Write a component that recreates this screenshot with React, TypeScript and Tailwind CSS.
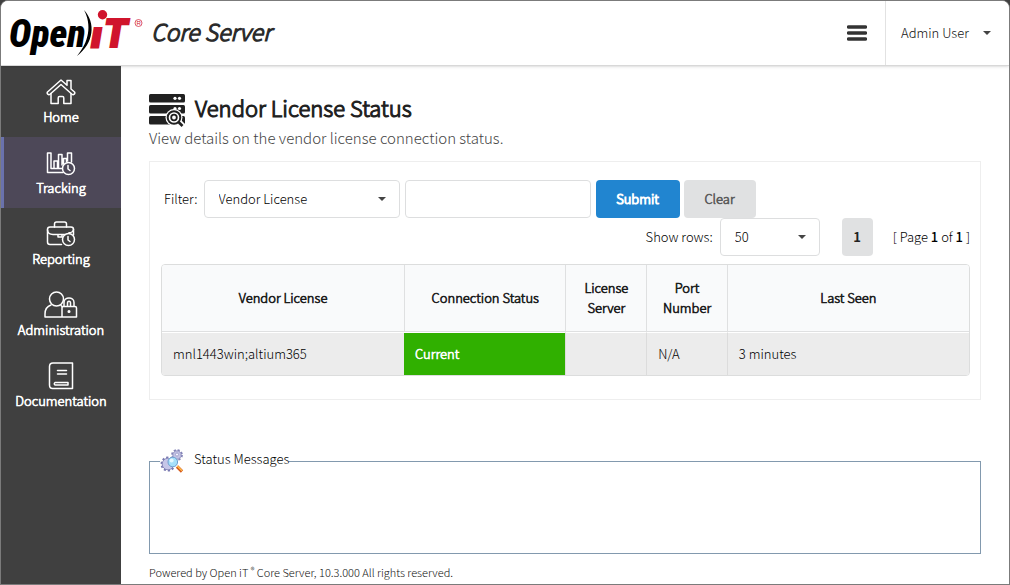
import type { ReactNode } from 'react';

const iconProps = {
  fill: 'none',
  stroke: 'currentColor',
  strokeLinecap: 'round' as const,
  strokeLinejoin: 'round' as const,
  'aria-hidden': true,
};

const strong = 'font-light [-webkit-text-stroke:0.05em_currentColor]';

function Logo() {
  return (
    <svg viewBox="0 0 142 60" className="h-[60px] w-[142px] shrink-0" role="img" aria-label="Open iT">
      <g
        fontFamily='"Roboto Condensed", "Liberation Sans Narrow", sans-serif'
        fontWeight="900"
        fontStyle="italic"
      >
        <text x="8" y="46" fontSize="38" fill="#000">Open</text>
        <g fill="#d0142c">
          <text x="91" y="46" fontSize="37" stroke="#d0142c" strokeWidth="3">i</text>
          <rect x="90" y="12" width="17" height="14" fill="#fff" />
          <text x="103" y="46" fontSize="38" fontFamily='"Roboto", sans-serif' stroke="#d0142c" strokeWidth="2">T</text>
        </g>
      </g>
      <path d="M83 9 C95 22 93 42 76 55 C88 41 91 24 83 9 Z" fill="#000" />
      <circle cx="101.500" cy="13.700" r="4.700" fill="#d0142c" />
      <circle cx="137.500" cy="22" r="3.500" fill="none" stroke="#d0142c" strokeWidth="0.700" />
      <text x="135.500" y="24" fontSize="6" fill="#d0142c" fontFamily="Liberation Sans, sans-serif">R</text>
    </svg>
  );
}

function HomeIcon() {
  return (
    <svg viewBox="0 0 30 26" className="h-[26px] w-[30px]" strokeWidth="1.500" {...iconProps}>
      <path d="M15 1 L21 6.300 V1.500 H25 V10 L28.500 13 C29.500 14.500 27.500 16.500 26 15.200 L15 5.500 L4 15.200 C2.500 16.500 .5 14.500 1.500 13 Z" />
      <path d="M5 14.500 V24.500 H12.200 V19 Q12.200 17.500 13.500 17.500 H16.500 Q17.800 17.500 17.800 19 V24.500 H25 V14.500" />
    </svg>
  );
}

function TrackingIcon() {
  return (
    <svg viewBox="0 0 30 26" className="h-[26px] w-[30px]" strokeWidth="1.500" {...iconProps}>
      <path d="M1.500 3 H5 V18.500 H16 M1.500 3 V22.500 H17" />
      <path d="M8 18 V11 H11.500 V18 M12.500 18 V4.500 H16 V15 M17.500 14 V8.500 H20.500 V11.500 M21.500 11 V3 H25.500 V12" />
      <circle cx="22.500" cy="18.500" r="6" />
      <path d="M22 15.500 V19 L24 20.500" />
    </svg>
  );
}

function ReportingIcon() {
  return (
    <svg viewBox="0 0 30 26" className="h-[26px] w-[30px]" strokeWidth="1.500" {...iconProps}>
      <path d="M8.500 6 V3 Q8.500 1 10.500 1 H18.500 Q20.500 1 20.500 3 V6" />
      <path d="M15.500 23.500 H4 Q1.500 23.500 1.500 21 V8.500 Q1.500 6 4 6 H25 Q27.500 6 27.500 8.500 V14" />
      <path d="M1.500 9 Q2 13.500 7 13.500 H19 M12 13.500 V16 H16 V13.500 M23 11.800 Q27 11.500 27.500 8.500" />
      <circle cx="22.500" cy="18.500" r="6" />
      <path d="M22 15.500 V19 L24 20.500" />
    </svg>
  );
}

function AdminIcon() {
  return (
    <svg viewBox="0 0 34 28" className="h-[28px] w-[34px]" strokeWidth="1.500" {...iconProps}>
      <circle cx="12.500" cy="8" r="7" />
      <path d="M7 14 Q1 16 1 23 V26 H32.500 V17 Q32.500 15.500 31 15.500 H18 V26 M17 14.500 L18.500 16" />
      <path d="M20 15 V11.500 C20 5.500 30 5.500 30 11.500 V15 M23.500 15 V12 C23.500 9.500 26.500 9.500 26.500 12 V15" />
      <circle cx="25" cy="20.500" r="0.800" fill="currentColor" />
    </svg>
  );
}

function DocsIcon() {
  return (
    <svg viewBox="0 0 26 28" className="h-[28px] w-[26px]" strokeWidth="1.500" {...iconProps}>
      <path d="M24.500 26.500 H4.500 Q1.500 26.500 1.500 23 V4.500 Q1.500 1 5 1 H24.500 Z" />
      <path d="M9.500 8.500 H18.500 M9.500 12 H18.500 M7 20.500 H20 V23 H7 Q5.500 21.800 7 20.500 Z" />
    </svg>
  );
}

function ServerSearchIcon() {
  return (
    <svg viewBox="0 0 36 34" className="h-[34px] w-[36px] shrink-0" aria-hidden="true">
      <g fill="#212121">
        <rect y="1" width="36" height="8.500" rx="1.500" />
        <rect y="12" width="36" height="8.500" rx="1.500" />
        <rect y="23" width="36" height="8.500" rx="1.500" />
      </g>
      <g fill="#fff">
        <circle cx="26" cy="5.300" r="1.600" />
        <circle cx="30.500" cy="5.300" r="1.600" />
        <circle cx="26" cy="15.500" r="1.600" />
        <circle cx="30.500" cy="15.500" r="1.600" />
        <circle cx="25" cy="24.500" r="8.500" />
        <path d="M28 30 L31 26 L36 31 V34 H31 Z" />
      </g>
      <circle cx="25" cy="24.500" r="6.300" fill="none" stroke="#212121" strokeWidth="2" />
      <circle cx="25" cy="24.500" r="2.800" fill="none" stroke="#212121" strokeWidth="1.800" />
      <path d="M29.500 29 L33.500 33" stroke="#212121" strokeWidth="2.600" />
    </svg>
  );
}

function GearSearchIcon() {
  return (
    <svg viewBox="0 0 24 24" className="h-6 w-6 shrink-0" aria-hidden="true">
      <circle cx="17" cy="6" r="5" fill="none" stroke="#8585b8" strokeWidth="1.800" strokeDasharray="2.200 1.727" />
      <circle cx="17" cy="6" r="4.200" fill="#c2c2e4" stroke="#8585b8" strokeWidth="0.800" />
      <circle cx="17" cy="5.500" r="1.500" fill="#f4f4ff" stroke="#8585b8" strokeWidth="0.600" />
      <circle cx="8" cy="15" r="6.600" fill="none" stroke="#7878b0" strokeWidth="1.800" strokeDasharray="2.200 1.948" />
      <circle cx="8" cy="15" r="5.800" fill="#c6c6e8" stroke="#7878b0" strokeWidth="0.800" />
      <path d="M17 17.500 L22 22.500" stroke="#d4581c" strokeWidth="3.200" />
      <path d="M17.200 17 L22 21.800" stroke="#ffc04d" strokeWidth="1.300" />
      <circle cx="12.800" cy="13" r="4.800" fill="#a5e0fb" stroke="#6d9fd0" strokeWidth="1" />
      <circle cx="11.600" cy="11.600" r="2" fill="#e4f8ff" />
    </svg>
  );
}

function Caret({ className = '' }: { className?: string }) {
  return (
    <svg viewBox="0 0 8 4" className={`h-1 w-2 ${className}`} aria-hidden="true">
      <path d="M0 0 H8 L4 4 Z" fill="#444" />
    </svg>
  );
}

function Select({ id, options, className }: { id: string; options: string[]; className: string }) {
  return (
    <div className={`relative ${className}`}>
      <select
        id={id}
        className="h-[38px] w-full appearance-none rounded border border-[#dddedf] bg-white pl-[14px] text-[13px] text-black"
      >
        {options.map((o) => (
          <option key={o}>{o}</option>
        ))}
      </select>
      <Caret className="pointer-events-none absolute top-[17px] right-[14px]" />
    </div>
  );
}

const nav: { label: string; icon: ReactNode; active?: boolean }[] = [
  { label: 'Home', icon: <HomeIcon /> },
  { label: 'Tracking', icon: <TrackingIcon />, active: true },
  { label: 'Reporting', icon: <ReportingIcon /> },
  { label: 'Administration', icon: <AdminIcon /> },
  { label: 'Documentation', icon: <DocsIcon /> },
];

const columns = [
  { label: 'Vendor License', width: 'w-[30%]' },
  { label: 'Connection Status', width: 'w-[20%]' },
  { label: 'License Server', width: 'w-[10%]' },
  { label: 'Port Number', width: 'w-[10%]' },
  { label: 'Last Seen', width: 'w-[30%]' },
];

export default function App() {
  return (
    <div className="flex min-h-screen bg-[#404040] font-['Noto_Sans_CJK_SC','Noto_Sans',sans-serif] text-[13px] leading-5 font-light text-black">
      <div className="flex flex-1 flex-col overflow-hidden rounded-t-lg border border-[#7b7b7b] bg-white">
        <header className="z-10 flex h-[65px] items-stretch border-b border-[#d8d8d8] bg-white shadow-sm">
          <a href="#home" className="flex items-start">
            <Logo />
            <span className={`pt-[14px] pl-2 text-[23px] leading-8 text-[#2b2b2b] italic ${strong}`}>Core Server</span>
          </a>
          <button type="button" aria-label="Menu" className="ml-auto flex w-14 items-center justify-center">
            <svg viewBox="0 0 20 16" className="h-4 w-5" aria-hidden="true">
              <path d="M1.500 2 H18.500 M1.500 8 H18.500 M1.500 14 H18.500" stroke="#333" strokeWidth="3.400" strokeLinecap="round" />
            </svg>
          </button>
          <button type="button" className="flex w-[124px] items-center justify-between border-l border-[#e2e2e2] pr-[18px] pl-[15px] text-[#111]">
            Admin User
            <Caret />
          </button>
        </header>

        <div className="flex flex-1">
          <nav className="w-[120px] shrink-0 bg-[#404040] text-white">
            {nav.map((n) => (
              <a
                key={n.label}
                href={`#${n.label.toLowerCase()}`}
                className={`flex h-[71px] flex-col items-center border-l-3 pt-[11px] pr-[3px] ${strong} ${
                  n.active ? 'border-[#6a72ad] bg-[#4d4858]' : 'border-transparent'
                }`}
              >
                <span className="flex h-[30px] items-center">{n.icon}</span>
                <span className="whitespace-nowrap">{n.label}</span>
              </a>
            ))}
          </nav>

          <main className="min-w-0 flex-1 px-7 pt-[27px]">
            <div className="flex items-start gap-[10px]">
              <ServerSearchIcon />
              <h1 className={`text-[22px] leading-7 text-[#212121] ${strong}`}>Vendor License Status</h1>
            </div>
            <p className="text-[15px] leading-[22px] text-[#444]">View details on the vendor license connection status.</p>

            <section className="mt-3 border border-[#eee] pt-[18px] pr-[10px] pb-[23px] pl-[11px]">
              <form className="flex items-center" onSubmit={(e) => e.preventDefault()}>
                <label htmlFor="filter" className="mr-[6px] ml-[3px]">Filter:</label>
                <Select id="filter" options={['Vendor License']} className="w-[196px]" />
                <input
                  type="text"
                  aria-label="Filter value"
                  className="mr-[5px] ml-[5px] h-[38px] w-[186px] rounded border border-[#dddedf] px-3"
                />
                <button type="submit" className="h-[38px] w-[84px] rounded bg-[#2185d0] font-light text-white [-webkit-text-stroke:0.08em_currentColor]">Submit</button>
                <button type="reset" className={`ml-1 h-[38px] w-[72px] rounded bg-[#e0e1e2] text-[#5a5a5a] ${strong}`}>Clear</button>
              </form>

              <div className="flex items-center justify-end">
                <label htmlFor="rows" className="mr-[7px]">Show rows:</label>
                <Select id="rows" options={['50']} className="w-[100px]" />
                <button type="button" className="ml-[22px] h-[38px] w-[31px] rounded bg-[#e0e1e2] font-bold text-[#222]">1</button>
                <span className="ml-5">
                  [ Page <b className="font-medium">1</b> of <b className="font-medium">1</b> ]
                </span>
              </div>

              <div className="mt-2 overflow-hidden rounded border border-[#dcdddd]">
                <table className="w-full table-fixed border-separate border-spacing-0">
                  <thead>
                    <tr className="bg-[#f9fafb]">
                      {columns.map((c) => (
                        <th
                          key={c.label}
                          className={`h-[67px] border-b border-l border-[#dfe0e1] px-3 text-[#1c1c1c] first:border-l-0 ${strong} ${c.width}`}
                        >
                          {c.label}
                        </th>
                      ))}
                    </tr>
                  </thead>
                  <tbody>
                    <tr className="bg-[#ececec]">
                      <td className="h-[43px] border-t border-white pl-[11px]">mnl1443win;altium365</td>
                      <td className={`border-t border-white bg-[#30b000] pl-[11px] text-white ${strong}`}>Current</td>
                      <td className="border-t border-l border-t-white border-l-[#dcdcdc]" />
                      <td className="border-t border-l border-t-white border-l-[#dcdcdc] pl-[11px]">N/A</td>
                      <td className="border-t border-l border-t-white border-l-[#dcdcdc] pl-[11px]">3 minutes</td>
                    </tr>
                  </tbody>
                </table>
              </div>
            </section>

            <fieldset className="mt-[49px] h-[105px] min-w-0 border border-[#8299ae] pl-[10px]">
              <legend className="flex items-start gap-[10px]">
                <GearSearchIcon />
                <span>Status Messages</span>
              </legend>
            </fieldset>

            <footer className="pt-2 pb-px text-[11px] leading-5 text-[#111]">
              Powered by Open iT <sup className="text-[8px]">®</sup> Core Server, 10.3.000 All rights reserved.
            </footer>
          </main>
        </div>
      </div>
    </div>
  );
}
